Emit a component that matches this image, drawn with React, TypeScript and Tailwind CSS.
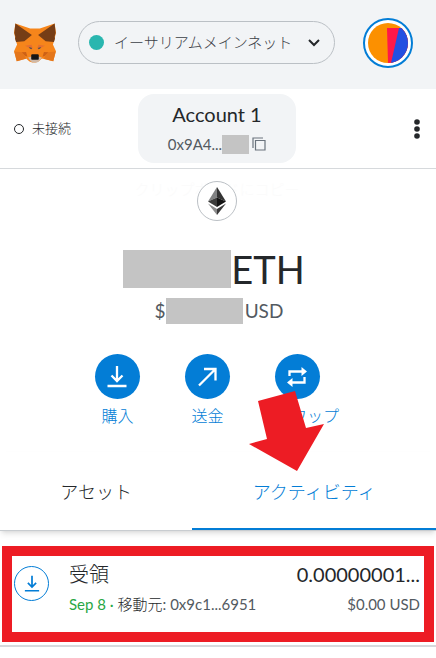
import { ReactNode } from 'react';

const TABS = ['アセット', 'アクティビティ'];

function FoxLogo() {
  return (
    <svg viewBox="45 68 122 116" className="h-10 w-[42px] shrink-0" aria-hidden="true">
      <path
        d="m49 69 43 15h28l43-15 4 27-6 26-3 8 9 20-8 29-33-8-10 9-8 3H98l-8-3-10-9-27 8-8-29 9-20-3-8-6-26z"
        fill="#f6851b"
      />
      <path d="m49 69 48 34-22 18-24 2-3-9 1-7-3-10zM163 69l-48 34 22 18 24 2 3-9-1-7 3-10z" fill="#763d16" />
      <path d="m46 151 21 2 10 11 3 8-27 7zM166 151l-21 2-10 11-3 8 27 7z" fill="#e4761b" />
      <path d="m67 153 13-1 4 14-6-2zM145 153l-13-1-4 14 6-2z" fill="#cd6116" />
      <path d="m77 134 19-3 4 12-11-3zM135 134l-19-3-4 12 11-3z" fill="#e56f30" />
      <path d="m88 138 8 2 1 4-6-2zM124 138l-8 2-1 4 6-2z" fill="#3c4654" />
      <path d="m86 168 11-3h18l11 3-8 10-6 5H99l-6-5z" fill="#cfb9a8" />
      <path d="m95 161 2-2h18l2 2v12l-2 2H97l-2-2z" fill="#161616" />
    </svg>
  );
}

function EthLogo() {
  return (
    <svg viewBox="0 0 18 28" className="h-7 w-[18px]" aria-hidden="true">
      <path d="M9 0v10.5L0 14.5z" fill="#828384" />
      <path d="M9 0v10.5l9 4z" fill="#343434" />
      <path d="M9 10.5V20l-9-5.5z" fill="#3c3c3b" />
      <path d="M9 10.5V20l9-5.5z" fill="#141414" />
      <path d="M0 16.5 9 22v6z" fill="#8c8c8c" />
      <path d="M18 16.5 9 22v6z" fill="#393939" />
    </svg>
  );
}

function Avatar() {
  return (
    <svg viewBox="0 0 40 40" className="size-10 rounded-full" aria-hidden="true">
      <path d="M0 0h40v40H0z" fill="#fc9000" />
      <path d="M19 5h21v35H20z" fill="#ff1848" />
      <path d="M31 5h9v35H23z" fill="#2350e1" />
    </svg>
  );
}

function DownloadIcon({ className }: { className: string }) {
  return (
    <svg viewBox="0 0 24 24" className={className} fill="none" stroke="currentColor" strokeWidth="2.3" aria-hidden="true">
      <path d="M12 1v14.500M6.500 10.500l5.500 5.500 5.500-5.500M2.500 21h19" />
    </svg>
  );
}

function SendIcon() {
  return (
    <svg viewBox="0 0 24 24" className="size-6" fill="none" stroke="currentColor" strokeWidth="2.3" aria-hidden="true">
      <path d="M4 20.500 20 4.500M9 4h11.500v11.500" />
    </svg>
  );
}

function SwapIcon() {
  return (
    <svg viewBox="0 0 24 24" className="size-6" aria-hidden="true">
      <path d="M4.500 11V6.500H17M19.500 12v5.500H7" fill="none" stroke="currentColor" strokeWidth="2.3" />
      <path d="m16.500 2 5.500 4.500-5.500 4.500zM7.500 13 2 17.500 7.500 22z" fill="currentColor" />
    </svg>
  );
}

function ActionButton({ label, children }: { label: string; children: ReactNode }) {
  return (
    <button type="button" className="flex flex-col items-start gap-[5px] text-[#037dd6]">
      <span className="flex size-[45px] items-center justify-center rounded-full bg-[#037dd6] text-white">
        {children}
      </span>
      <span className="min-w-full text-center text-base leading-6 font-light">{label}</span>
    </button>
  );
}

export default function App() {
  return (
    <div className="bg-white font-[Lato,'Noto_Sans_CJK_JP',sans-serif] text-[#24272a]">
      <header className="flex h-[89px] items-center bg-[#f2f4f6] pr-[23px] pb-1 pl-3.5">
        <FoxLogo />
        <div className="mr-7 ml-[22px] flex h-[43px] flex-1 items-center rounded-full border border-[#bbc0c5] px-2.5">
          <span className="size-[15px] shrink-0 rounded-full bg-[#29b6af]" />
          <select
            aria-label="ネットワーク"
            className="min-w-0 flex-1 appearance-none bg-transparent pl-2.5 text-[15px] font-light text-[#3b4046]"
          >
            <option>イーサリアムメインネット</option>
          </select>
          <svg viewBox="0 0 12 8" className="mr-1 h-2 w-3" fill="none" stroke="#24272a" strokeWidth="2" aria-hidden="true">
            <path d="m1 1 5 5 5-5" />
          </svg>
        </div>
        <button
          type="button"
          aria-label="アカウント"
          className="flex size-[50px] shrink-0 items-center justify-center rounded-full border-2 border-[#037dd6] bg-white"
        >
          <Avatar />
        </button>
      </header>

      <div className="grid h-20 grid-cols-[1fr_158px_1fr] items-center border-b border-[#d6d9dc] pr-3.5 pl-3">
        <div className="flex items-center gap-2 pl-0.5 text-[13px] font-light text-[#24272a]">
          <span className="size-2.5 rounded-full border border-[#24272a]" />
          未接続
        </div>
        <button type="button" className="flex h-[69px] flex-col items-center rounded-2xl bg-[#f2f4f6] pt-1">
          <span className="text-xl leading-8">Account 1</span>
          <span className="flex items-center pt-0.5 text-[15px] leading-6 text-[#535a61]">
            0x9A4...
            <span className="h-[19px] w-[27px] bg-[#c4c4c4]" />
            <svg viewBox="0 0 14 14" className="ml-[3px] size-3.5" fill="none" stroke="#6a737d" strokeWidth="1.200" aria-hidden="true">
              <path d="M1 11V1h10" />
              <path d="M3.500 3.500h9.500V13H3.500z" />
            </svg>
          </span>
        </button>
        <button type="button" aria-label="メニュー" className="justify-self-end">
          <svg viewBox="0 0 10 20" className="h-5 w-2.5" fill="#24272a" aria-hidden="true">
            <circle cx="5" cy="3" r="2.800" />
            <circle cx="5" cy="10" r="2.800" />
            <circle cx="5" cy="17" r="2.800" />
          </svg>
        </button>
      </div>

      <main>
        <section className="relative flex flex-col items-center pt-3 pr-0.5">
          <span className="absolute top-2 text-[15px] leading-6 font-light text-[#fbfbfb]">クリップボードにコピー</span>
          <div className="relative flex size-10 items-center justify-center rounded-full border border-[#bbc0c5] bg-white">
            <EthLogo />
          </div>
          <div className="mt-6 flex items-center pr-1.5 text-[38px] leading-12">
            <span className="h-[38px] w-[108px] bg-[#c4c4c4]" />
            ETH
          </div>
          <div className="mt-1 flex items-center pl-1 text-[19px] leading-7 text-[#535a61]">
            $
            <span className="mr-0.5 h-[26px] w-[77px] bg-[#c4c4c4]" />
            USD
          </div>
          <div className="relative mt-[29px] flex gap-[45px]">
            <ActionButton label="購入">
              <DownloadIcon className="size-6" />
            </ActionButton>
            <ActionButton label="送金">
              <SendIcon />
            </ActionButton>
            <ActionButton label="スワップ">
              <SwapIcon />
            </ActionButton>
            <svg viewBox="0 0 76 82" className="absolute top-9 left-[154px] h-[82px] w-[76px] max-w-none" fill="#ed1c24" aria-hidden="true">
              <path d="M9 11 46 1 57 38 75 34 48 81 0 54 18 49z" />
            </svg>
          </div>
        </section>

        <nav className="mt-6 flex border-b border-[#c8ccd0] shadow-md">
          {TABS.map((tab, index) => (
            <button
              key={tab}
              type="button"
              className={
                index === 1
                  ? 'h-[78px] flex-auto border-b-2 border-[#037dd6] pt-1 text-lg font-light text-[#037dd6]'
                  : 'h-[78px] flex-auto border-b-2 border-transparent pt-1 text-lg font-light'
              }
            >
              {tab}
            </button>
          ))}
        </nav>

        <ul>
          <li className="relative flex items-start gap-5 border-b-2 border-[#d6d9dc] pt-[27px] pr-4 pb-[27px] pl-3.5">
            <span className="mt-2 flex size-[35px] shrink-0 items-center justify-center rounded-full border border-[#037dd6] text-[#037dd6]">
              <DownloadIcon className="size-[18px]" />
            </span>
            <div className="flex-1">
              <div className="flex justify-between text-xl leading-8">
                <span className="font-light">受領</span>
                <span>0.00000001...</span>
              </div>
              <div className="flex justify-between text-[15px] leading-7 text-[#535a61]">
                <span>
                  <span className="text-[#28a745]">Sep 8 · </span>
                  <span className="font-light text-[#24272a]">移動元</span>: 0x9c1...6951
                </span>
                <span>$0.00 USD</span>
              </div>
            </div>
            <span className="absolute inset-x-0.5 top-[15px] bottom-[3px] border-10 border-[#ed1c24]" />
          </li>
        </ul>
      </main>
    </div>
  );
}
